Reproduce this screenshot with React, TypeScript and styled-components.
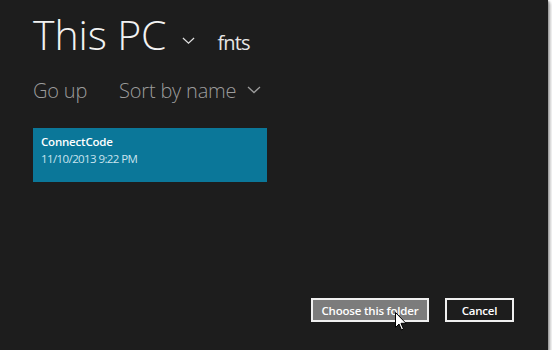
import React from "react";
import styled, { createGlobalStyle } from "styled-components";

const Global = createGlobalStyle`
  html, body { margin: 0; padding: 0; background: #ffffff; }
  body { font-family: "Open Sans", "Noto Sans", sans-serif; }
`;

const Frame = styled.div`
  width: 548px;
  height: 350px;
  background: #1d1d1d;
  box-shadow: 1px 1px 2px #8a8a8a, 3px 3px 3px #cfcfcf;
  position: relative;
  display: flex;
  flex-direction: column;
  padding: 0 0 0 33px;
  box-sizing: border-box;
`;

const Header = styled.div`
  display: flex;
  align-items: baseline;
  margin-top: 8px;
  height: 52px;
`;

const Title = styled.h1`
  margin: 0;
  font-family: "Open Sans", sans-serif;
  font-weight: 300;
  font-size: 41px;
  letter-spacing: -0.1px;
  color: #f2f2f2;
  line-height: 52px;
`;

const Chevron = styled.svg<{ $ml: number; $mt?: number }>`
  margin-left: ${(p) => p.$ml}px;
  align-self: ${(p) => (p.$mt !== undefined ? "flex-start" : "center")};
  margin-top: ${(p) => p.$mt ?? 0}px;
`;

const Crumb = styled.span`
  margin-left: 22px;
  font-family: "Open Sans", sans-serif;
  font-weight: 400;
  font-size: 20px;
  letter-spacing: -0.9px;
  color: #e6e6e6;
`;

const Toolbar = styled.div`
  display: flex;
  align-items: center;
  margin-top: 18px;
  height: 24px;
`;

const ToolItem = styled.span<{ $ml?: number }>`
  margin-left: ${(p) => p.$ml ?? 0}px;
  font-family: "Open Sans", sans-serif;
  font-weight: 300;
  font-size: 20px;
  letter-spacing: -0.2px;
  color: #9c9c9c;
  display: flex;
  align-items: center;
`;

const Tile = styled.div`
  margin-top: 26px;
  width: 234px;
  height: 54px;
  background: #0b7799;
  box-sizing: border-box;
  padding: 6px 8px 0;
  display: flex;
  flex-direction: column;
`;

const TileName = styled.span`
  font-family: "Open Sans", sans-serif;
  font-weight: 600;
  font-size: 11.5px;
  letter-spacing: -0.2px;
  color: #ffffff;
  line-height: 16px;
`;

const TileDate = styled.span`
  font-family: "Open Sans", sans-serif;
  font-weight: 400;
  font-size: 11.5px;
  letter-spacing: -0.6px;
  color: #c9e3ee;
  line-height: 17px;
`;

const Spacer = styled.div`
  flex: 1;
`;

const Buttons = styled.div`
  display: flex;
  justify-content: flex-end;
  gap: 16px;
  padding-right: 34px;
  margin-bottom: 28px;
`;

const Button = styled.button<{ $primary?: boolean }>`
  height: 24px;
  width: ${(p) => (p.$primary ? 118 : 69)}px;
  box-sizing: border-box;
  border: 2px solid #f0f0f0;
  background: ${(p) => (p.$primary ? "#7c7c7c" : "#1d1d1d")};
  color: #ffffff;
  font-family: "Open Sans", sans-serif;
  font-weight: 600;
  font-size: 11.5px;
  letter-spacing: -0.2px;
  padding: 0;
  display: flex;
  align-items: center;
  justify-content: center;
`;

const Cursor = styled.svg`
  position: absolute;
  left: 395px;
  top: 312px;
`;

const Chev = ({ w, ml, mt, color }: { w: number; ml: number; mt?: number; color: string }) => (
  <Chevron $ml={ml} $mt={mt} width={w} height={w / 2 + 1} viewBox="0 0 14 8">
    <polyline points="1,1 7,6.5 13,1" fill="none" stroke={color} strokeWidth="1.3" />
  </Chevron>
);

export default function App() {
  return (
    <>
      <Global />
      <Frame>
        <Header>
          <Title>This PC</Title>
          <Chev w={13} ml={16} mt={29} color="#e0e0e0" />
          <Crumb>fnts</Crumb>
        </Header>
        <Toolbar>
          <ToolItem>Go up</ToolItem>
          <ToolItem $ml={32}>
            Sort by name
            <Chev w={14} ml={11} color="#9c9c9c" />
          </ToolItem>
        </Toolbar>
        <Tile>
          <TileName>ConnectCode</TileName>
          <TileDate>11/10/2013 9:22 PM</TileDate>
        </Tile>
        <Spacer />
        <Buttons>
          <Button $primary>Choose this folder</Button>
          <Button>Cancel</Button>
        </Buttons>
        <Cursor width="12" height="19" viewBox="0 0 12 19">
          <path d="M0.5 0.5 L0.5 15.5 L4 12 L6.5 18 L8.5 17 L6 11.3 L11 11.3 Z" fill="#ffffff" stroke="#000000" strokeWidth="1" />
        </Cursor>
      </Frame>
    </>
  );
}
